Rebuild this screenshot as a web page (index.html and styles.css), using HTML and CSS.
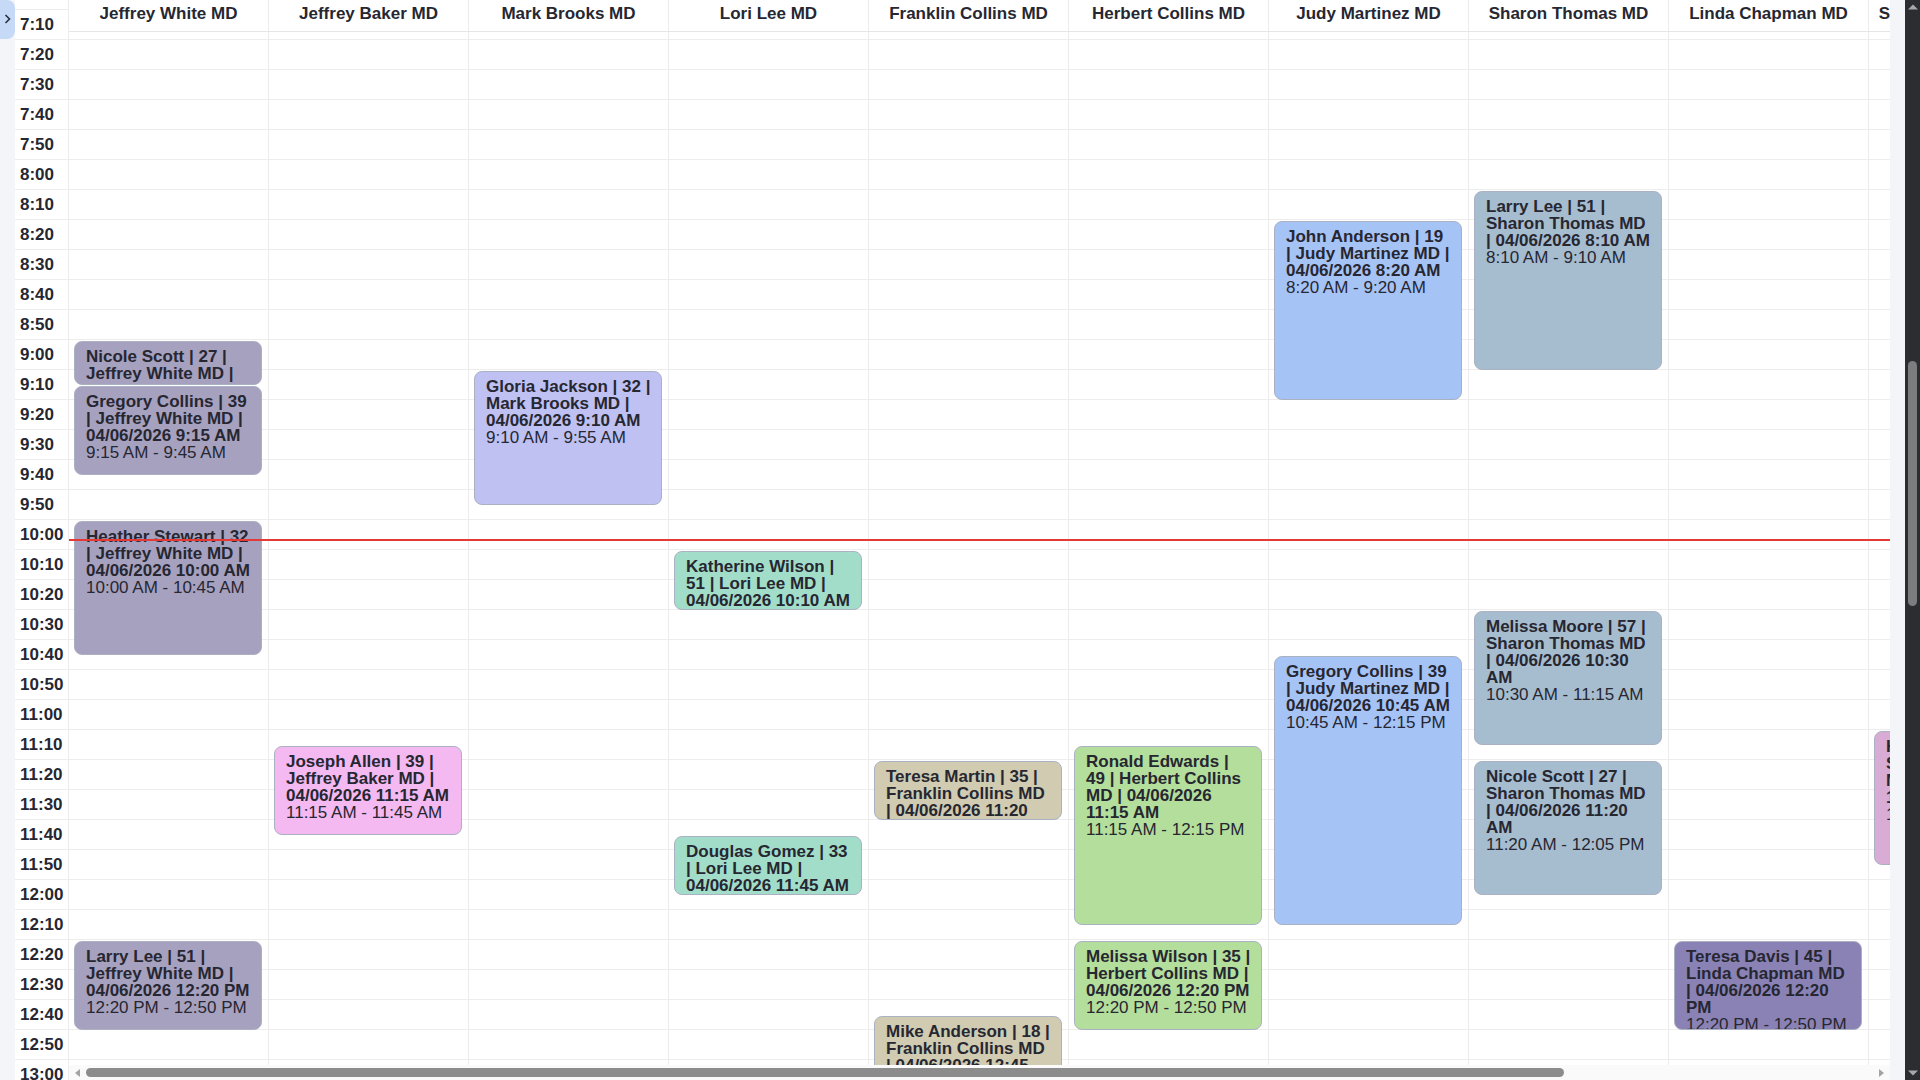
FILE: index.html
```html
<!DOCTYPE html>
<html>
<head>
<meta charset="utf-8">
<title>Schedule</title>
<link rel="stylesheet" href="styles.css">
</head>
<body>
<div class="app">
  <div class="side">
    <button class="toggle"><svg width="9" height="12" viewBox="0 0 9 12"><path d="M2.5 2 L6.5 6 L2.5 10" fill="none" stroke="#2b2f3a" stroke-width="1.6"/></svg></button>
  </div>
  <div class="times">
    <div class="tcell">7:10</div><div class="tcell">7:20</div><div class="tcell">7:30</div><div class="tcell">7:40</div><div class="tcell">7:50</div>
    <div class="tcell">8:00</div><div class="tcell">8:10</div><div class="tcell">8:20</div><div class="tcell">8:30</div><div class="tcell">8:40</div><div class="tcell">8:50</div>
    <div class="tcell">9:00</div><div class="tcell">9:10</div><div class="tcell">9:20</div><div class="tcell">9:30</div><div class="tcell">9:40</div><div class="tcell">9:50</div>
    <div class="tcell">10:00</div><div class="tcell">10:10</div><div class="tcell">10:20</div><div class="tcell">10:30</div><div class="tcell">10:40</div><div class="tcell">10:50</div>
    <div class="tcell">11:00</div><div class="tcell">11:10</div><div class="tcell">11:20</div><div class="tcell">11:30</div><div class="tcell">11:40</div><div class="tcell">11:50</div>
    <div class="tcell">12:00</div><div class="tcell">12:10</div><div class="tcell">12:20</div><div class="tcell">12:30</div><div class="tcell">12:40</div><div class="tcell">12:50</div>
    <div class="tcell">13:00</div><div class="tcell">13:10</div>
  </div>
  <div class="grid-wrap">
    <div class="viewport">
      <div class="inner">
        <div class="head">
          <div class="hcell">Jeffrey White MD</div>
          <div class="hcell">Jeffrey Baker MD</div>
          <div class="hcell">Mark Brooks MD</div>
          <div class="hcell">Lori Lee MD</div>
          <div class="hcell">Franklin Collins MD</div>
          <div class="hcell">Herbert Collins MD</div>
          <div class="hcell">Judy Martinez MD</div>
          <div class="hcell">Sharon Thomas MD</div>
          <div class="hcell">Linda Chapman MD</div>
          <div class="hcell">Samuel Rodriguez MD</div>
        </div>
        <div class="cols">
          <div class="col">
            <div class="appt c-white" style="top:331px;height:44px"><span class="t">Nicole Scott | 27 | Jeffrey White MD | 04/06/2026 9:00 AM</span><span class="r">9:00 AM - 9:15 AM</span></div>
            <div class="appt c-white" style="top:376px;height:89px"><span class="t">Gregory Collins | 39 | Jeffrey White MD | 04/06/2026 9:15 AM</span><span class="r">9:15 AM - 9:45 AM</span></div>
            <div class="appt c-white" style="top:511px;height:134px"><span class="t">Heather Stewart | 32 | Jeffrey White MD | 04/06/2026 10:00 AM</span><span class="r">10:00 AM - 10:45 AM</span></div>
            <div class="appt c-white" style="top:931px;height:89px"><span class="t">Larry Lee | 51 | Jeffrey White MD | 04/06/2026 12:20 PM</span><span class="r">12:20 PM - 12:50 PM</span></div>
          </div>
          <div class="col">
            <div class="appt c-baker" style="top:736px;height:89px"><span class="t">Joseph Allen | 39 | Jeffrey Baker MD | 04/06/2026 11:15 AM</span><span class="r">11:15 AM - 11:45 AM</span></div>
          </div>
          <div class="col">
            <div class="appt c-brooks" style="top:361px;height:134px"><span class="t">Gloria Jackson | 32 | Mark Brooks MD | 04/06/2026 9:10 AM</span><span class="r">9:10 AM - 9:55 AM</span></div>
          </div>
          <div class="col">
            <div class="appt c-lee" style="top:541px;height:59px"><span class="t">Katherine Wilson | 51 | Lori Lee MD | 04/06/2026 10:10 AM</span><span class="r">10:10 AM - 10:30 AM</span></div>
            <div class="appt c-lee" style="top:826px;height:59px"><span class="t">Douglas Gomez | 33 | Lori Lee MD | 04/06/2026 11:45 AM</span><span class="r">11:45 AM - 12:05 PM</span></div>
          </div>
          <div class="col">
            <div class="appt c-franklin" style="top:751px;height:59px"><span class="t">Teresa Martin | 35 | Franklin Collins MD | 04/06/2026 11:20 AM</span><span class="r">11:20 AM - 11:40 AM</span></div>
            <div class="appt c-franklin" style="top:1006px;height:89px"><span class="t">Mike Anderson | 18 | Franklin Collins MD | 04/06/2026 12:45 PM</span><span class="r">12:45 PM - 1:15 PM</span></div>
          </div>
          <div class="col">
            <div class="appt c-herbert" style="top:736px;height:179px"><span class="t">Ronald Edwards | 49 | Herbert Collins MD | 04/06/2026 11:15 AM</span><span class="r">11:15 AM - 12:15 PM</span></div>
            <div class="appt c-herbert" style="top:931px;height:89px"><span class="t">Melissa Wilson | 35 | Herbert Collins MD | 04/06/2026 12:20 PM</span><span class="r">12:20 PM - 12:50 PM</span></div>
          </div>
          <div class="col">
            <div class="appt c-judy" style="top:211px;height:179px"><span class="t">John Anderson | 19 | Judy Martinez MD | 04/06/2026 8:20 AM</span><span class="r">8:20 AM - 9:20 AM</span></div>
            <div class="appt c-judy" style="top:646px;height:269px"><span class="t">Gregory Collins | 39 | Judy Martinez MD | 04/06/2026 10:45 AM</span><span class="r">10:45 AM - 12:15 PM</span></div>
          </div>
          <div class="col">
            <div class="appt c-sharon" style="top:181px;height:179px"><span class="t">Larry Lee | 51 | Sharon Thomas MD | 04/06/2026 8:10 AM</span><span class="r">8:10 AM - 9:10 AM</span></div>
            <div class="appt c-sharon" style="top:601px;height:134px"><span class="t">Melissa Moore | 57 | Sharon Thomas MD | 04/06/2026 10:30 AM</span><span class="r">10:30 AM - 11:15 AM</span></div>
            <div class="appt c-sharon" style="top:751px;height:134px"><span class="t">Nicole Scott | 27 | Sharon Thomas MD | 04/06/2026 11:20 AM</span><span class="r">11:20 AM - 12:05 PM</span></div>
          </div>
          <div class="col">
            <div class="appt c-linda" style="top:931px;height:89px"><span class="t">Teresa Davis | 45 | Linda Chapman MD | 04/06/2026 12:20 PM</span><span class="r">12:20 PM - 12:50 PM</span></div>
          </div>
          <div class="col">
            <div class="appt c-sam" style="top:721px;height:134px"><span class="t">Helen Garcia | 44 | Samuel Rodriguez MD | 04/06/2026 11:10 AM</span><span class="r">11:10 AM - 11:55 AM</span></div>
          </div>
          <div class="now-line"></div>
        </div>
      </div>
    </div>
    <div class="hscroll">
      <svg class="arrow" width="8" height="10" viewBox="0 0 8 10"><path d="M6 1 L1 5 L6 9 Z" fill="#a3a3a3"/></svg>
      <div class="htrack"><div class="hthumb"></div></div>
      <svg class="arrow" width="8" height="10" viewBox="0 0 8 10"><path d="M2 1 L7 5 L2 9 Z" fill="#a3a3a3"/></svg>
    </div>
  </div>
  <div class="gutter"></div>
  <div class="vscroll">
    <svg class="varrow" width="12" height="8" viewBox="0 0 12 8"><path d="M1 6.5 L6 1.5 L11 6.5 Z" fill="#a8a8a8"/></svg>
    <div class="vtrack"><div class="vthumb"></div></div>
    <svg class="varrow" width="12" height="8" viewBox="0 0 12 8"><path d="M1 1.5 L6 6.5 L11 1.5 Z" fill="#a8a8a8"/></svg>
  </div>
</div>
</body>
</html>
```
FILE: styles.css
```css
* { box-sizing: border-box; }
html, body { margin: 0; padding: 0; height: 100%; }
body {
  background: #f3f5f8;
  font-family: "Liberation Sans", Arial, sans-serif;
  color: #262731;
  overflow: hidden;
}
.app {
  display: flex;
  height: 1080px;
  width: 1920px;
}
.side {
  width: 15px;
  flex: none;
  background: #f3f5f8;
}
.toggle {
  display: flex;
  align-items: center;
  justify-content: center;
  width: 15px;
  height: 39px;
  padding: 0 0 2px 0;
  border: none;
  border-radius: 0 8px 8px 0;
  background: #c6d9f6;
}
.times {
  width: 54px;
  flex: none;
  background: #fff;
  border-right: 1px solid #ececec;
  overflow: hidden;
  padding-top: 9px;
}
.tcell {
  height: 30px;
  line-height: 29px;
  border-top: 1px solid #ededed;
  padding-left: 5px;
  font-size: 17px;
  font-weight: bold;
  white-space: nowrap;
}
.grid-wrap {
  width: 1821px;
  flex: none;
  display: flex;
  flex-direction: column;
  background: #fff;
}
.viewport {
  flex: 1;
  overflow: hidden;
}
.inner {
  width: 2000px;
}
.head {
  position: sticky;
  top: 0;
  z-index: 3;
  display: flex;
  height: 32px;
  margin-bottom: -22px;
  background: #fff;
  border-bottom: 1px solid #e6e6e6;
}
.hcell {
  width: 200px;
  flex: none;
  border-right: 1px solid #ececec;
  text-align: center;
  font-size: 17px;
  line-height: 17px;
  font-weight: bold;
  padding-top: 5px;
  white-space: nowrap;
}
.cols {
  position: relative;
  display: flex;
  height: 1100px;
  background-image: repeating-linear-gradient(to bottom, transparent 0, transparent 29px, #ededed 29px, #ededed 30px);
}
.col {
  position: relative;
  width: 200px;
  flex: none;
  border-right: 1px solid #ececec;
}
.appt {
  position: absolute;
  left: 5px;
  right: 6px;
  overflow: hidden;
  border: 1px solid #aab1c3;
  border-radius: 8px;
  padding: 6px 10px 0 11px;
  font-size: 17px;
  line-height: 17px;
}
.appt .t { display: block; font-weight: bold; }
.appt .r { display: block; }
.c-white { background: #a6a1bf; }
.c-baker { background: #f4b9f0; }
.c-brooks { background: #bec1f1; }
.c-lee { background: #a2ddca; }
.c-franklin { background: #d0cbb1; }
.c-herbert { background: #b4de9c; }
.c-judy { background: #a6c3f6; }
.c-sharon { background: #a6bccf; }
.c-linda { background: #8a82b5; }
.c-sam { background: #d9acd6; }
.now-line {
  position: absolute;
  left: 0;
  right: 0;
  top: 529px;
  height: 2px;
  background: #e53935;
  z-index: 2;
}
.hscroll {
  height: 15px;
  flex: none;
  display: flex;
  align-items: center;
  background: #fafafa;
  padding: 0 5px;
  gap: 4px;
}
.arrow { flex: none; }
.htrack {
  flex: 1;
  height: 9px;
}
.hthumb {
  width: 1478px;
  height: 9px;
  border-radius: 5px;
  background: #8c8c8c;
}
.gutter {
  width: 15px;
  flex: none;
  background: #f3f5f8;
}
.vscroll {
  width: 15px;
  flex: none;
  display: flex;
  flex-direction: column;
  align-items: center;
  background: #2c2d31;
  padding: 3px 0;
}
.varrow { flex: none; }
.vtrack {
  flex: 1;
  width: 100%;
  display: flex;
  flex-direction: column;
  align-items: center;
  padding-top: 350px;
}
.vthumb {
  width: 9px;
  height: 245px;
  border-radius: 5px;
  background: #7d7d80;
}
```
